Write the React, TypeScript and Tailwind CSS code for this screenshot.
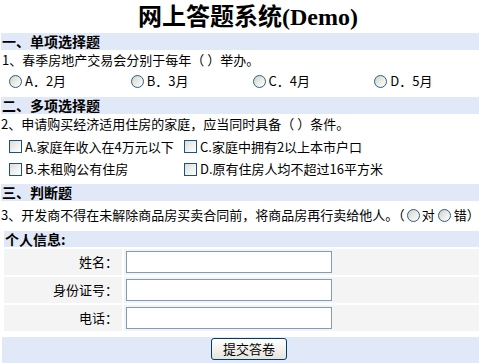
import React from "react";

const font = { fontFamily: '"Noto Sans CJK SC", "Liberation Sans", sans-serif' };

function Radio() {
  return (
    <span className="inline-block w-[13px] h-[13px] rounded-full border border-[#2a5d8a] bg-gradient-to-br from-[#d0d0c8] via-[#ebebe6] to-white shrink-0" />
  );
}

function Check() {
  return (
    <span className="inline-block w-[13px] h-[13px] border border-[#1c5180] bg-gradient-to-br from-[#dcdcd6] via-[#efefec] to-white shrink-0" />
  );
}

function SectionHeader({ children }: { children: React.ReactNode }) {
  return (
    <div className="h-[17px] bg-[#e1e9f9] font-bold text-[14px] leading-[17px] pl-[1px] ml-[1px]">
      {children}
    </div>
  );
}

function InfoRow({ label }: { label: string }) {
  return (
    <div className="flex gap-[2px] h-[26px]">
      <div className="w-[118px] bg-[#f4f4f4] flex items-center justify-end pr-[4px]">{label}</div>
      <div className="flex-1 bg-[#f4f4f4] flex items-center pl-[2px]">
        <div className="w-[206px] h-[22px] border border-[#7f9db9] bg-white" />
      </div>
    </div>
  );
}

export default function App() {
  const opts = ["A．2月", "B．3月", "C．4月", "D．5月"];
  return (
    <div className="w-[479px] h-[363px] overflow-hidden bg-white text-black" style={font}>
      <div className="w-[496px] text-[13px]">
        <div
          className="h-[33px] flex items-center justify-center text-[24px] font-bold"
          style={{ fontFamily: '"Liberation Serif", "Noto Sans CJK SC", serif' }}
        >
          网上答题系统(Demo)
        </div>
        <SectionHeader>一、单项选择题</SectionHeader>
        <div className="h-[20px] leading-[20px] pl-[2px]">1、春季房地产交易会分别于每年（ ）举办。</div>
        <div className="h-[22px] flex items-center pl-[9px]">
          {opts.map((o) => (
            <div key={o} className="w-[123px] flex items-center gap-[3px]">
              <Radio />
              <span>{o}</span>
            </div>
          ))}
        </div>
        <div className="h-[5px]" />
        <SectionHeader>二、多项选择题</SectionHeader>
        <div className="h-[20px] leading-[20px] pl-[1px]">2、申请购买经济适用住房的家庭，应当同时具备（ ）条件。</div>
        <div className="h-[1px]" />
        <div className="flex flex-col pl-[9px]">
          <div className="h-[23px] flex items-center">
            <div className="w-[175px] flex items-center gap-[3px]"><Check /><span>A.家庭年收入在4万元以下</span></div>
            <div className="flex items-center gap-[3px]"><Check /><span>C.家庭中拥有2以上本市户口</span></div>
          </div>
          <div className="h-[22px] flex items-center">
            <div className="w-[175px] flex items-center gap-[3px]"><Check /><span>B.未租购公有住房</span></div>
            <div className="flex items-center gap-[3px]"><Check /><span>D.原有住房人均不超过16平方米</span></div>
          </div>
        </div>
        <div className="h-[4px]" />
        <SectionHeader>三、判断题</SectionHeader>
        <div className="h-[28px] flex items-center pl-[1px]">
          <span>3、开发商不得在未解除商品房买卖合同前，将商品房再行卖给他人。（</span>
          <span className="mx-[2px] flex items-center"><Radio /></span>
          <span>对</span>
          <span className="mx-[3px] flex items-center"><Radio /></span>
          <span>错）</span>
        </div>
        <div className="ml-[4px] mr-[2px] pt-[2px] flex flex-col gap-[2px]">
          <div className="h-[16px] bg-[#e1e9f9] font-bold text-[14px] leading-[16px] pl-[1px]">个人信息:</div>
          <InfoRow label="姓名：" />
          <InfoRow label="身份证号：" />
          <InfoRow label="电话：" />
        </div>
        <div className="mt-[6px] ml-[2px] h-[30px] bg-[#e1e9f9] flex justify-center pt-[1px]">
          <button className="w-[76px] h-[22px] rounded-[3px] border border-[#003c74] bg-gradient-to-b from-white to-[#e6e4da] text-[13px] leading-[20px]">
            提交答卷
          </button>
        </div>
      </div>
    </div>
  );
}
